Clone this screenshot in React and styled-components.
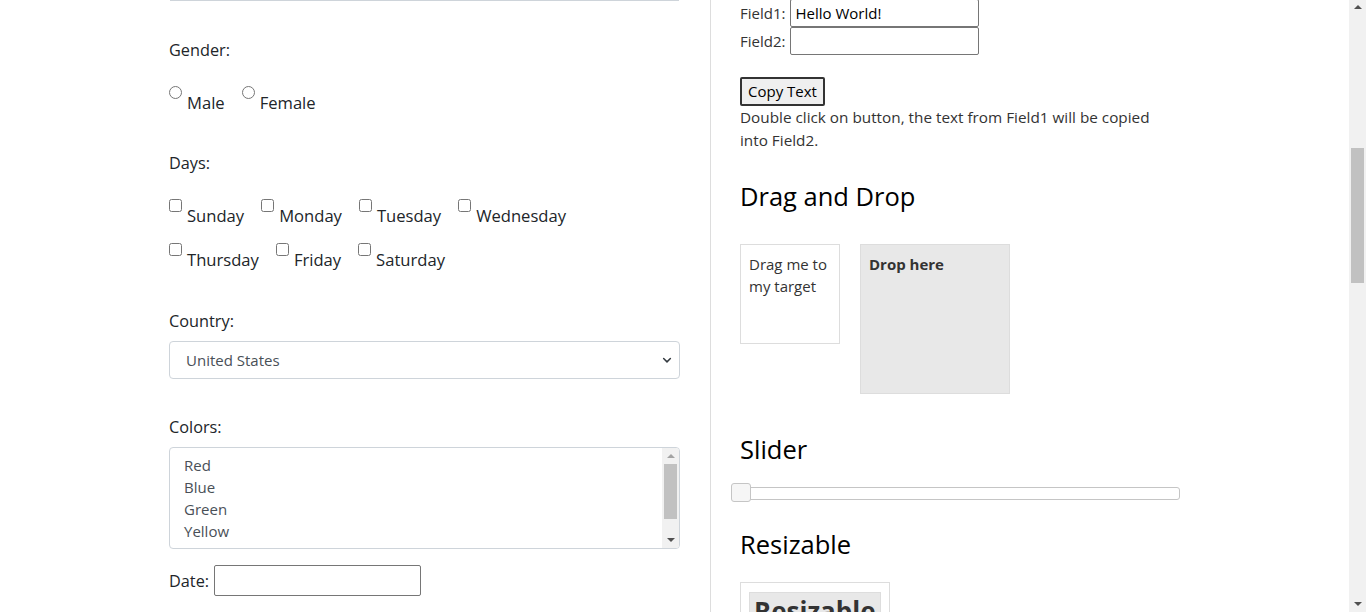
import styled, { createGlobalStyle } from "styled-components"

const GlobalStyle = createGlobalStyle`
    html, body {
        margin: 0;
        padding: 0;
        overflow: hidden;
    }
    body {
        font-family: "Open Sans", "Noto Sans", sans-serif;
        color: #222;
        background: #fff;
    }
`

const days = [
    ["Sunday", "Monday", "Tuesday", "Wednesday"],
    ["Thursday", "Friday", "Saturday"],
]

const colors = ["Red", "Blue", "Green", "Yellow", "White"]

export default function App() {
    return (
        <>
            <GlobalStyle />
            <Window>
                <Page>
                    <Container>
                        <LeftColumn>
                            <TextareaEdge />

                            <FieldLabel $top={37}>Gender:</FieldLabel>
                            <OptionRow $top={24}>
                                <Option $gap={17}>
                                    <input type="radio" name="gender" />
                                    <span>Male</span>
                                </Option>
                                <Option $gap={17}>
                                    <input type="radio" name="gender" />
                                    <span>Female</span>
                                </Option>
                            </OptionRow>

                            <FieldLabel $top={36}>Days:</FieldLabel>
                            {days.map((row, i) => (
                                <OptionRow key={i} $top={i === 0 ? 24 : 15}>
                                    {row.map((day) => (
                                        <Option key={day} $gap={17}>
                                            <input type="checkbox" />
                                            <span>{day}</span>
                                        </Option>
                                    ))}
                                </OptionRow>
                            ))}

                            <FieldLabel $top={37}>Country:</FieldLabel>
                            <SelectWrap>
                                <Select defaultValue="us">
                                    <option value="us">United States</option>
                                    <option value="ca">Canada</option>
                                    <option value="uk">United Kingdom</option>
                                </Select>
                                <Chevron viewBox="0 0 16 16">
                                    <path d="M3.5 6l4.5 4.5L12.5 6" fill="none" stroke="#343a40" strokeWidth="2" strokeLinecap="round" strokeLinejoin="round" />
                                </Chevron>
                            </SelectWrap>

                            <FieldLabel $top={36}>Colors:</FieldLabel>
                            <ListBox>
                                <ListOptions>
                                    {colors.map((c) => (
                                        <ListOption key={c}>{c}</ListOption>
                                    ))}
                                </ListOptions>
                                <MiniScrollbar>
                                    <Arrow $up />
                                    <MiniThumb />
                                    <Arrow />
                                </MiniScrollbar>
                            </ListBox>

                            <DateRow>
                                <span>Date:</span>
                                <DateInput type="text" />
                            </DateRow>
                        </LeftColumn>

                        <RightColumn>
                            <FieldRow>
                                <span>Field1:</span>
                                <TextInput type="text" defaultValue="Hello World!" />
                            </FieldRow>
                            <FieldRow>
                                <span>Field2:</span>
                                <TextInput type="text" />
                            </FieldRow>

                            <CopyButton>Copy Text</CopyButton>
                            <Description>
                                Double click on button, the text from Field1 will be copied into Field2.
                            </Description>

                            <SectionTitle $top={28}>Drag and Drop</SectionTitle>
                            <DragArea>
                                <Draggable>Drag me to my target</Draggable>
                                <Droppable>Drop here</Droppable>
                            </DragArea>

                            <SectionTitle $top={39}>Slider</SectionTitle>
                            <SliderTrack>
                                <SliderHandle />
                            </SliderTrack>

                            <SectionTitle $top={28}>Resizable</SectionTitle>
                            <ResizableBox>
                                <ResizableHeader>Resizable</ResizableHeader>
                            </ResizableBox>
                        </RightColumn>
                    </Container>
                </Page>

                <PageScrollbar>
                    <PageArrow $up />
                    <PageThumb />
                    <PageArrow />
                </PageScrollbar>
            </Window>
        </>
    )
}

const Window = styled.div`
    display: flex;
    height: 612px;
    width: 1366px;
    overflow: hidden;
`

const Page = styled.div`
    flex: 1;
    overflow: hidden;
`

const Container = styled.div`
    width: 1011px;
    margin: 0 auto;
    display: grid;
    grid-template-columns: 541px 1fr;
    height: 612px;
`

const LeftColumn = styled.div`
    padding-right: 30px;
    font-size: 16px;
    color: #212529;
`

const TextareaEdge = styled.div`
    height: 1px;
    margin: 0 1px;
    background: #ced4da;
`

const FieldLabel = styled.div`
    margin-top: ${(p) => p.$top}px;
    line-height: 24px;
    font-size: 16.3px;
`

const OptionRow = styled.div`
    display: flex;
    margin-top: ${(p) => p.$top}px;
`

const Option = styled.label`
    display: inline-flex;
    align-items: flex-start;
    margin-right: ${(p) => p.$gap}px;
    font-size: 16.6px;
    line-height: 24px;

    input {
        width: 13px;
        height: 13px;
        margin: 0 5px 0 0;
    }

    span {
        padding-top: 5px;
    }
`

const SelectWrap = styled.div`
    position: relative;
    margin-top: 8px;
    width: 511px;
`

const Select = styled.select`
    appearance: none;
    display: block;
    width: 100%;
    height: 38px;
    box-sizing: border-box;
    padding: 0 32px 0 16px;
    border: 1px solid #ced4da;
    border-radius: 4px;
    background: #fff;
    color: #495057;
    font-family: "Open Sans", "Noto Sans", sans-serif;
    font-size: 15px;
`

const Chevron = styled.svg`
    position: absolute;
    right: 7px;
    top: 13px;
    width: 12px;
    height: 12px;
    pointer-events: none;
`

const ListBox = styled.div`
    margin-top: 8px;
    width: 511px;
    height: 102px;
    box-sizing: border-box;
    border: 1px solid #ced4da;
    border-radius: 4px;
    display: flex;
    overflow: hidden;
    color: #495057;
`

const ListOptions = styled.div`
    flex: 1;
    padding: 6px 14px 0;
    overflow: hidden;
`

const ListOption = styled.div`
    font-size: 15px;
    line-height: 22px;
`

const MiniScrollbar = styled.div`
    width: 17px;
    background: #f1f1f1;
    display: flex;
    flex-direction: column;
    align-items: center;
`

const Arrow = styled.div`
    width: 0;
    height: 0;
    margin: ${(p) => (p.$up ? "6px 0 6px" : "auto 0 6px")};
    border-left: 4px solid transparent;
    border-right: 4px solid transparent;
    ${(p) => (p.$up ? "border-bottom: 4px solid #a3a3a3;" : "border-top: 4px solid #505050;")}
`

const MiniThumb = styled.div`
    width: 13px;
    height: 55px;
    background: #c1c1c1;
`

const DateRow = styled.div`
    margin-top: 16px;
    display: flex;
    align-items: center;
    gap: 5px;
    font-size: 16.3px;
`

const DateInput = styled.input`
    width: 207px;
    height: 31px;
    box-sizing: border-box;
    border: 1px solid #767676;
    border-radius: 2px;
    padding: 0 4px;
`

const RightColumn = styled.div`
    border-left: 1px solid #ddd;
    padding-left: 29px;
    font-size: 15px;
    color: #333;
`

const FieldRow = styled.div`
    display: flex;
    align-items: center;
    gap: 5px;
    height: 28px;
    font-size: 15px;

    &:first-child {
        margin-top: -1px;
    }
`

const TextInput = styled.input`
    width: 189px;
    height: 28px;
    box-sizing: border-box;
    border: 1px solid #767676;
    border-radius: 2px;
    padding: 0 4px;
    font-family: "Open Sans", "Noto Sans", sans-serif;
    font-size: 15px;
    color: #000;
`

const CopyButton = styled.button`
    display: block;
    margin-top: 22px;
    height: 29px;
    width: 85px;
    box-sizing: border-box;
    border: 2px solid #333;
    border-radius: 2px;
    background: #efefef;
    font-family: "Open Sans", "Noto Sans", sans-serif;
    font-size: 15px;
    line-height: 22px;
    color: #000;
    padding: 0 0 2px;
`

const Description = styled.p`
    margin: 0;
    max-width: 425px;
    line-height: 23px;
    font-size: 15.3px;
`

const SectionTitle = styled.h2`
    margin: ${(p) => p.$top}px 0 0;
    font-size: 25.5px;
    font-weight: 400;
    line-height: 32px;
    color: #000;
`

const DragArea = styled.div`
    display: flex;
    align-items: flex-start;
    gap: 20px;
    margin-top: 32px;
`

const Draggable = styled.div`
    width: 100px;
    height: 100px;
    box-sizing: border-box;
    border: 1px solid #ddd;
    padding: 8px 8px;
    line-height: 22px;
    font-size: 15px;
    color: #333;
`

const Droppable = styled.div`
    width: 150px;
    height: 150px;
    box-sizing: border-box;
    border: 1px solid #ddd;
    background: #e8e8e8;
    padding: 8px 8px;
    line-height: 22px;
    font-size: 15px;
    font-weight: 700;
    color: #333;
`

const SliderTrack = styled.div`
    position: relative;
    margin-top: 22px;
    width: 440px;
    height: 13px;
    box-sizing: border-box;
    border: 1px solid #c5c5c5;
    border-radius: 3px;
    background: #fff;
`

const SliderHandle = styled.div`
    position: absolute;
    left: -10px;
    top: -5px;
    width: 20px;
    height: 19px;
    box-sizing: border-box;
    border: 1px solid #c5c5c5;
    border-radius: 3px;
    background: #f6f6f6;
`

const ResizableBox = styled.div`
    margin-top: 22px;
    width: 150px;
    height: 150px;
    box-sizing: border-box;
    border: 1px solid #ddd;
    padding: 9px 8px;
`

const ResizableHeader = styled.h3`
    margin: 0;
    background: #e8e8e8;
    border: 1px solid #ddd;
    padding: 0 4px;
    font-size: 26px;
    line-height: 36px;
    font-weight: 700;
    color: #333;
`

const PageScrollbar = styled.div`
    width: 17px;
    height: 612px;
    background: #f1f1f1;
    display: flex;
    flex-direction: column;
    align-items: center;
`

const PageArrow = styled.div`
    width: 0;
    height: 0;
    margin: ${(p) => (p.$up ? "5px 0 0" : "auto 0 6px")};
    border-left: 4px solid transparent;
    border-right: 4px solid transparent;
    ${(p) => (p.$up ? "border-bottom: 4px solid #505050;" : "border-top: 4px solid #505050;")}
`

const PageThumb = styled.div`
    width: 13px;
    height: 135px;
    margin-top: 139px;
    background: #c1c1c1;
`
